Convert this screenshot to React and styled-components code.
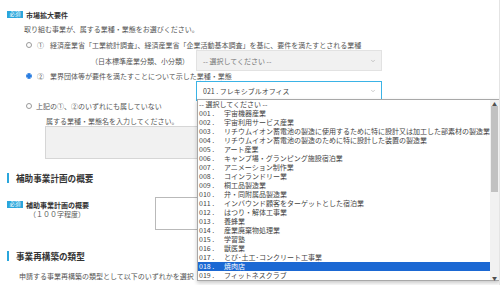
import React from 'react'
import styled, { createGlobalStyle } from 'styled-components'
import { ChevronDown } from 'lucide-react'

const GlobalStyle = createGlobalStyle`
  html, body { margin: 0; padding: 0; background: #fff; }
  body {
    width: 500px;
    height: 285px;
    overflow: hidden;
    font-family: "Noto Sans CJK JP", "Noto Sans", sans-serif;
    color: #555;
  }
  * { box-sizing: border-box; }
`

const Page = styled.div`
  width: 500px;
  height: 285px;
  padding: 0 0 0 7px;
  border-right: 1px solid #e4e4e4;
  overflow: hidden;
  font-size: 7px;
`

const HeadRow = styled.div`
  display: flex;
  align-items: center;
  gap: 3px;
  height: 9px;
  margin-top: ${p => p.$top || 0}px;
`

const Badge = styled.span`
  display: inline-flex;
  align-items: center;
  justify-content: center;
  width: 16px;
  height: 7px;
  background: #2aa6dc;
  color: #fff;
  font-size: 5.5px;
  line-height: 1;
`

const Title = styled.span`
  font-size: 7px;
  font-weight: 700;
  color: #333;
`

const Text = styled.div`
  height: ${p => p.$h || 10}px;
  line-height: ${p => p.$h || 10}px;
  margin-top: ${p => p.$top || 0}px;
  padding-left: ${p => p.$left || 0}px;
  white-space: nowrap;
  color: #555;
`

const RadioRow = styled.div`
  display: flex;
  align-items: center;
  height: ${p => p.$h || 10}px;
  margin-top: ${p => p.$top || 0}px;
  padding-left: 19px;
  white-space: nowrap;
`

const Radio = styled.span`
  width: 6px;
  height: 6px;
  border-radius: 50%;
  border: 1px solid ${p => (p.$on ? '#2a7de1' : '#9a9a9a')};
  background: ${p => (p.$on ? 'radial-gradient(circle, #2a7de1 0 1.6px, #fff 1.9px)' : '#fff')};
  margin-right: ${p => p.$gap}px;
  flex: none;
`

const Num = styled.span`
  width: 7px;
  margin-right: 6px;
`

const SelectGrid = styled.div`
  display: grid;
  grid-template-columns: 189px 186px;
  align-items: center;
  height: ${p => p.$h}px;
`

const SideLabel = styled.span`
  text-align: right;
  padding-right: 7px;
`

const SelectBox = styled.div`
  position: relative;
  display: flex;
  align-items: center;
  justify-content: space-between;
  height: ${p => p.$h}px;
  padding: 0 5px 0 6px;
  background: ${p => (p.$focus ? '#fff' : '#f1f1f1')};
  border: 1px solid ${p => (p.$focus ? '#3bb3e6' : '#e2e2e2')};
  color: ${p => (p.$focus ? '#444' : '#777')};
`

const Area = styled.div`
  width: ${p => p.$w}px;
  height: 33px;
  margin-left: ${p => p.$left || 0}px;
  background: ${p => (p.$gray ? '#f1f1f1' : '#fff')};
  border: 1px solid ${p => (p.$gray ? '#d6d6d6' : '#b9b9b9')};
`

const Heading = styled.div`
  display: flex;
  align-items: center;
  height: 10px;
  margin-top: ${p => p.$top}px;
  font-size: 8.6px;
  font-weight: 700;
  color: #333;
  &::before {
    content: '';
    width: 2px;
    height: 10px;
    background: #2aa6dc;
    margin-right: 7px;
  }
`

const PlanRow = styled.div`
  display: flex;
  margin-top: 14px;
`

const PlanLabel = styled.div`
  width: 148px;
  padding-top: 3px;
`

const Sub = styled.div`
  padding-left: 22px;
  margin-top: 1px;
  height: 9px;
  line-height: 9px;
`

const Listbox = styled.div`
  position: absolute;
  top: calc(100% - 1px);
  left: 0;
  width: 303px;
  height: 182px;
  display: flex;
  background: #fff;
  border: 1px solid #a8a8a8;
  box-shadow: 0 2px 4px rgba(0, 0, 0, 0.22);
  z-index: 5;
`

const Options = styled.div`
  flex: 1;
  overflow: hidden;
`

const Option = styled.div`
  height: 9px;
  line-height: 9px;
  padding-left: 1px;
  white-space: nowrap;
  color: ${p => (p.$sel ? '#fff' : '#444')};
  background: ${p => (p.$sel ? '#1b68d3' : 'transparent')};
`

const Code = styled.span`
  display: inline-block;
  width: 25px;
  white-space: pre;
`

const Scrollbar = styled.div`
  width: 9px;
  display: flex;
  flex-direction: column;
  align-items: center;
  background: #f1f1f1;
`

const Arrow = styled.span`
  height: 6px;
  display: flex;
  align-items: center;
  font-size: 5px;
  line-height: 1;
  color: #505050;
`

const Thumb = styled.div`
  width: 7px;
  height: 86px;
  background: #c1c1c1;
`

const Track = styled.div`
  flex: 1;
`

const OPTIONS = [
  ['001', '宇宙機器産業'],
  ['002', '宇宙利用サービス産業'],
  ['003', 'リチウムイオン蓄電池の製造に使用するために特に設計又は加工した部素材の製造業'],
  ['004', 'リチウムイオン蓄電池の製造のために特に設計した装置の製造業'],
  ['005', 'アート産業'],
  ['006', 'キャンプ場・グランピング施設宿泊業'],
  ['007', 'アニメーション制作業'],
  ['008', 'コインランドリー業'],
  ['009', '桐工品製造業'],
  ['010', '弁・同附属品製造業'],
  ['011', 'インバウンド顧客をターゲットとした宿泊業'],
  ['012', 'はつり・解体工事業'],
  ['013', '養蜂業'],
  ['014', '産業廃棄物処理業'],
  ['015', '学習塾'],
  ['016', '獣医業'],
  ['017', 'とび･土工･コンクリート工事業'],
  ['018', '焼肉店'],
  ['019', 'フィットネスクラブ'],
]

export default function App() {
  return (
    <Page>
      <GlobalStyle />
      <HeadRow $top={10}>
        <Badge>必須</Badge>
        <Title>市場拡大要件</Title>
      </HeadRow>
      <Text $top={5} $left={17}>取り組む事業が、属する業種・業態をお選びください。</Text>

      <RadioRow $top={6}>
        <Radio $gap={5} />
        <Num>①</Num>
        経済産業省「工業統計調査」、経済産業省「企業活動基本調査」を基に、要件を満たすとされる業種
      </RadioRow>
      <SelectGrid $h={21}>
        <SideLabel>（日本標準産業分類、小分類）</SideLabel>
        <SelectBox $h={21}>
          -- 選択してください --
          <ChevronDown size={6} color="#999" strokeWidth={2} />
        </SelectBox>
      </SelectGrid>

      <RadioRow>
        <Radio $on $gap={5} />
        <Num>②</Num>
        業界団体等が要件を満たすことについて示した業種・業態
      </RadioRow>
      <SelectGrid $h={20}>
        <span />
        <SelectBox $h={20} $focus>
          021 . フレキシブルオフィス
          <ChevronDown size={6} color="#999" strokeWidth={2} />
          <Listbox>
            <Options>
              <Option>-- 選択してください --</Option>
              {OPTIONS.map(([code, name]) => (
                <Option key={code} $sel={code === '018'}>
                  <Code>{code} . </Code>
                  {name}
                </Option>
              ))}
            </Options>
            <Scrollbar>
              <Arrow>▲</Arrow>
              <Thumb />
              <Track />
              <Arrow>▼</Arrow>
            </Scrollbar>
          </Listbox>
        </SelectBox>
      </SelectGrid>

      <RadioRow $h={9}>
        <Radio $gap={4} />
        上記の①、②のいずれにも属していない
      </RadioRow>
      <Text $top={6} $left={39}>属する業種・業態名を入力してください。</Text>
      <Area $gray $left={38} $w={340} />

      <Heading $top={14}>補助事業計画の概要</Heading>
      <PlanRow>
        <PlanLabel>
          <HeadRow>
            <Badge>必須</Badge>
            <Title>補助事業計画の概要</Title>
          </HeadRow>
          <Sub>（１００字程度）</Sub>
        </PlanLabel>
        <Area $w={230} />
      </PlanRow>

      <Heading $top={21}>事業再構築の類型</Heading>
      <Text $top={10} $left={12}>申請する事業再構築の類型として以下のいずれかを選択</Text>
    </Page>
  )
}
